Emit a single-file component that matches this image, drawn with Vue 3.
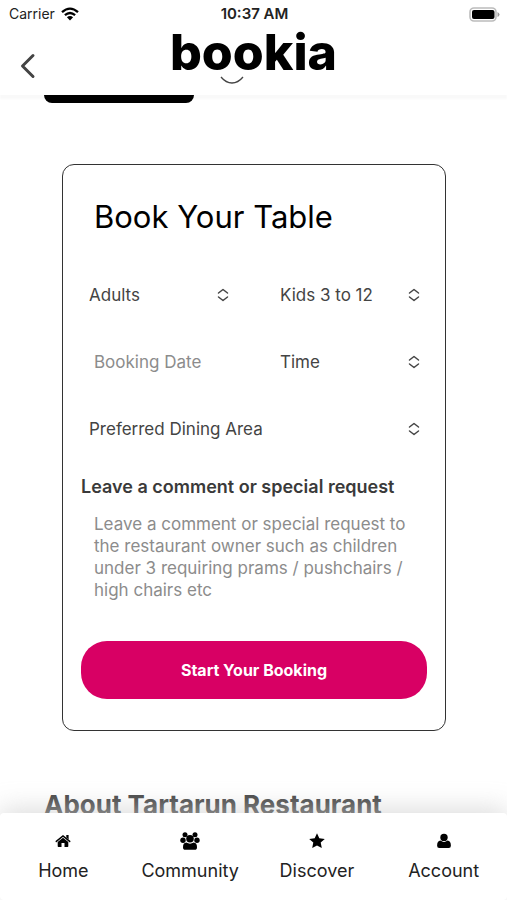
<script setup>
import { ref } from 'vue'

const bookingDate = ref('')
const comment = ref('')
const topFields = [
  { id: 'adults', label: 'Adults' },
  { id: 'kids', label: 'Kids 3 to 12' },
]
const lowerFields = [
  { id: 'time', label: 'Time' },
  { id: 'area', label: 'Preferred Dining Area', wide: true },
]
const commentHint =
  'Leave a comment or special request to the restaurant owner such as children under 3 requiring prams / pushchairs / high chairs etc'
</script>

<template>
  <div class="screen">
    <div class="status">
      <div class="carrier">
        <span>Carrier</span>
        <svg width="18" height="14" viewBox="0 0 18 14" fill="none" stroke="#000" stroke-width="2.3">
          <path d="M1 5.2Q9-2 17 5.2M3.9 8.2Q9 3.8 14.1 8.2" />
          <path d="M9 13.6 5.9 10.3Q9 7.8 12.1 10.3Z" fill="#000" stroke="none" />
        </svg>
      </div>
      <span class="clock">10:37 AM</span>
      <svg class="battery" width="31" height="15" viewBox="0 0 31 15">
        <rect x="1" y="1" width="26" height="13" rx="4" fill="#fff" stroke="#bcbcbc" stroke-width="1.6" />
        <rect x="3" y="3" width="22.5" height="9" rx="2" fill="#000" />
        <path d="M28.5 5Q30.5 6 30.5 7.5T28.5 10Z" fill="#999" />
      </svg>
    </div>

    <header class="header">
      <button class="back" type="button" aria-label="Back">
        <svg width="16" height="26" viewBox="0 0 16 26" fill="none" stroke="#444" stroke-width="3" stroke-linecap="round" stroke-linejoin="round">
          <path d="M13 2.5 2.5 13 13 23.5" />
        </svg>
      </button>
      <a class="logo" href="#">
        <span>bookia</span>
        <svg class="smile" width="26" height="9" viewBox="0 0 26 9" fill="none" stroke="#444" stroke-width="1.3">
          <path d="M2 1Q7 7 13 7T24 1" />
        </svg>
      </a>
    </header>

    <main class="content">
      <div class="tab"></div>
      <form class="card" @submit.prevent>
        <h1>Book Your Table</h1>
        <div class="fields">
          <label v-for="f in topFields" :key="f.id" class="picker" :for="f.id">
            <select :id="f.id" :aria-label="f.label">
              <option>{{ f.label }}</option>
            </select>
            <svg width="12" height="14" viewBox="0 0 12 14" fill="none" stroke="#444" stroke-width="1.5" stroke-linecap="round" stroke-linejoin="round">
              <path d="M1.5 5 6 1.5 10.5 5M1.5 9 6 12.5 10.5 9" />
            </svg>
          </label>
          <input v-model="bookingDate" class="date" type="text" placeholder="Booking Date" aria-label="Booking Date" />
          <label v-for="f in lowerFields" :key="f.id" class="picker" :class="{ wide: f.wide }" :for="f.id">
            <select :id="f.id" :aria-label="f.label">
              <option>{{ f.label }}</option>
            </select>
            <svg width="12" height="14" viewBox="0 0 12 14" fill="none" stroke="#444" stroke-width="1.5" stroke-linecap="round" stroke-linejoin="round">
              <path d="M1.5 5 6 1.5 10.5 5M1.5 9 6 12.5 10.5 9" />
            </svg>
          </label>
        </div>
        <label class="comment-label" for="comment">Leave a comment or special request</label>
        <textarea id="comment" v-model="comment" rows="4" :placeholder="commentHint"></textarea>
        <button class="submit" type="submit">Start Your Booking</button>
      </form>
      <h2>About Tartarun Restaurant</h2>
    </main>

    <nav class="nav">
      <a href="#">
        <svg width="16" height="16" viewBox="0 0 16 16">
          <path d="M1.3 8.4 8 2.9 14.7 8.4" fill="none" stroke="#000" stroke-width="1.5" stroke-linecap="round" />
          <path d="M11.3 2H13.6V6.5L11.3 4.6Z" />
          <path d="M2.7 9 8 4.7 13.3 9V13.3Q13.3 14 12.6 14H9.5V10H6.5V14H3.4Q2.7 14 2.7 13.3Z" />
        </svg>
        <span>Home</span>
      </a>
      <a href="#">
        <svg width="20" height="18" viewBox="0 0 20 18">
          <circle cx="5" cy="2.7" r="2.5" /><circle cx="15" cy="2.7" r="2.5" />
          <circle cx="3" cy="8.3" r="2.7" /><circle cx="17" cy="8.3" r="2.7" />
          <circle cx="10" cy="6.8" r="3.8" />
          <path d="M3 15.2C3 12.2 4 10.7 6.3 10.5Q10 12.8 13.7 10.5C16 10.7 17 12.2 17 15.2Q17 17.8 14.6 17.8H5.4Q3 17.8 3 15.2Z" />
        </svg>
        <span>Community</span>
      </a>
      <a href="#">
        <svg width="16" height="16" viewBox="0 0 16 16">
          <path d="M8 .3 10.3 5.3 15.8 5.9 11.7 9.6 12.8 15.1 8 12.4 3.2 15.1 4.3 9.6 .2 5.9 5.7 5.3Z" />
        </svg>
        <span>Discover</span>
      </a>
      <a href="#">
        <svg width="16" height="16" viewBox="0 0 16 16">
          <circle cx="8" cy="4.4" r="3.7" />
          <path d="M1.1 12.7C1.1 9.5 2.2 7.7 4.5 7.5Q8 10.4 11.5 7.5C13.8 7.7 14.9 9.5 14.9 12.7Q14.9 15 12.7 15H3.3Q1.1 15 1.1 12.7Z" />
        </svg>
        <span>Account</span>
      </a>
    </nav>
  </div>
</template>

<style>
body {
  margin: 0;
  background: #fff;
}
</style>

<style scoped>
.screen {
  display: flex;
  flex-direction: column;
  height: 100vh;
  overflow: hidden;
  background: #fff;
  color: #444;
  font-family: Inter, "Liberation Sans", sans-serif;
}
.screen *,
.screen {
  box-sizing: border-box;
}
svg {
  display: block;
}
.status {
  display: grid;
  grid-template-columns: 1fr auto 1fr;
  align-items: center;
  height: 28px;
  padding: 0 7px 0 9px;
  font-size: 15px;
  line-height: 16px;
  color: #222;
}
.carrier {
  display: flex;
  align-items: center;
  gap: 6px;
  font-size: 14px;
}
.clock {
  font-weight: 600;
}
.battery {
  justify-self: end;
}
.header {
  display: grid;
  grid-template-columns: 1fr auto 1fr;
  height: 67px;
  padding: 0 16px;
  box-shadow: 0 4px 2px #f9f9f9;
}
.back {
  display: flex;
  align-items: center;
  justify-self: start;
  padding: 8px 4px 0;
  border: 0;
  background: none;
}
.logo {
  display: flex;
  flex-direction: column;
  align-items: center;
  color: #000;
  font-size: 50px;
  font-weight: 800;
  line-height: 48px;
  text-decoration: none;
}
.smile {
  margin-right: 44px;
}
.content {
  flex: 1;
  min-height: 0;
  overflow: hidden;
}
.tab {
  width: 150px;
  height: 8px;
  margin-left: 44px;
  border-radius: 0 0 8px 8px;
  background: #000;
}
.card {
  display: flex;
  flex-direction: column;
  margin: 61px 61px 0 62px;
  padding: 32px 18px 31px;
  border: 1px solid #333;
  border-radius: 12px;
}
h1 {
  margin: 0 0 38px;
  padding-left: 13px;
  color: #000;
  font-size: 31px;
  font-weight: 400;
  line-height: 40px;
}
.fields {
  display: grid;
  grid-template-columns: 1fr 1fr;
  gap: 27px 36px;
}
.picker {
  display: grid;
  align-items: center;
}
.picker > * {
  grid-area: 1 / 1;
}
.picker svg {
  justify-self: end;
  margin-right: 7px;
  pointer-events: none;
}
.wide {
  grid-column: 1 / -1;
}
select,
.date {
  width: 100%;
  height: 40px;
  margin: 0;
  padding: 0 8px;
  border: 0;
  background: none;
  appearance: none;
  color: #444;
  font-family: inherit;
  font-size: 17px;
}
.date {
  padding: 0 13px;
}
.date::placeholder,
textarea::placeholder {
  color: #8c8c8c;
  opacity: 1;
}
.comment-label {
  margin-top: 26px;
  color: #3a3a3a;
  font-size: 18px;
  font-weight: 600;
  line-height: 24px;
}
textarea {
  width: 100%;
  height: 104px;
  margin: 6px 0 32px;
  padding: 8px 13px;
  border: 0;
  background: none;
  resize: none;
  overflow: hidden;
  font-family: inherit;
  font-size: 17px;
  line-height: 22px;
}
.submit {
  height: 58px;
  border: 0;
  border-radius: 26px;
  background: #d80064;
  color: #fff;
  font-family: inherit;
  font-size: 16px;
  font-weight: 700;
}
h2 {
  margin: 58px 44px 0;
  font-size: 26px;
  font-weight: 700;
  line-height: 32px;
}
.nav {
  display: grid;
  grid-template-columns: repeat(4, 1fr);
  z-index: 1;
  height: 87px;
  padding-top: 19px;
  border-radius: 4px;
  background: #fff;
  box-shadow: 0 -4px 26px rgba(205, 205, 205, 0.7);
}
.nav a {
  display: flex;
  flex-direction: column;
  align-items: center;
  gap: 9px;
  color: #222;
  font-size: 18px;
  line-height: 24px;
  text-decoration: none;
}
.nav svg {
  height: 18px;
  fill: #000;
}
</style>
